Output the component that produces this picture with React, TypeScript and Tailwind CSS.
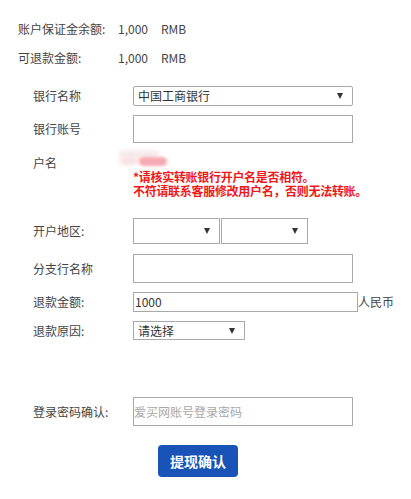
import React from "react";

const font = { fontFamily: '"Noto Sans CJK SC", "Noto Sans", sans-serif' };

function Caret() {
  return (
    <span className="inline-block h-0 w-0 border-x-[3px] border-t-[6px] border-x-transparent border-t-[#333]" />
  );
}

function FakeSelect({ value, className }: { value?: string; className: string }) {
  return (
    <div
      className={`flex items-center justify-between border border-[#a9a9a9] bg-white pl-[4px] pr-[9px] text-[12px] text-[#333] ${className}`}
    >
      <span>{value ?? ""}</span>
      <Caret />
    </div>
  );
}

function Row({
  label,
  children,
  className = "",
}: {
  label: string;
  children: React.ReactNode;
  className?: string;
}) {
  return (
    <div className={`flex items-center pl-[33px] ${className}`}>
      <div className="w-[100px] shrink-0 text-[12px] text-[#444]">{label}</div>
      {children}
    </div>
  );
}

export default function App() {
  return (
    <div className="w-[411px] h-[499px] bg-white" style={font}>
      <div className="pt-[19px] pl-[18px] text-[12px] text-[#444]">
        <div className="flex h-[20px] items-center">
          <span className="w-[100px]">账户保证金余额:</span>
          <span className="w-[43px]">1,000</span>
          <span>RMB</span>
        </div>
        <div className="mt-[9px] flex h-[20px] items-center">
          <span className="w-[100px]">可退款金额:</span>
          <span className="w-[43px]">1,000</span>
          <span>RMB</span>
        </div>
      </div>

      <Row label="银行名称" className="mt-[18px]">
        <FakeSelect value="中国工商银行" className="h-[20px] w-[220px] rounded-[2px]" />
      </Row>

      <Row label="银行账号" className="mt-[9px]">
        <div className="h-[28px] w-[220px] border border-[#a9a9a9]" />
      </Row>

      <div className="mt-[8px] flex pl-[33px]">
        <div className="w-[100px] shrink-0 pt-[2px] text-[12px] leading-[20px] text-[#444]">
          户名
        </div>
        <div>
          <div className="relative h-[19px] w-[60px]">
            <div className="absolute left-[-14px] top-[-1px] h-[9px] w-[40px] rounded-full bg-[#f7eaec] blur-[2px]" />
            <div className="absolute left-[-13px] top-[6px] h-[8px] w-[18px] rounded-full bg-[#f8dfe3] blur-[2px]" />
            <div className="absolute left-[6px] top-[6px] h-[9px] w-[28px] rounded-full bg-[#f5a9b2] blur-[1.5px]" />
          </div>
          <div className="text-[12px] font-bold leading-[14px] tracking-[-0.3px] text-[#f01818]">
            <div>*请核实转账银行开户名是否相符。</div>
            <div>不符请联系客服修改用户名，否则无法转账。</div>
          </div>
        </div>
      </div>

      <Row label="开户地区:" className="mt-[20px]">
        <div className="flex">
          <FakeSelect className="h-[26px] w-[87px]" />
          <FakeSelect className="ml-[1px] h-[26px] w-[87px]" />
        </div>
      </Row>

      <Row label="分支行名称" className="mt-[10px]">
        <div className="h-[29px] w-[220px] border border-[#a9a9a9]" />
      </Row>

      <Row label="退款金额:" className="mt-[9px]">
        <div className="flex items-center">
          <div className="flex h-[20px] w-[225px] items-center border border-[#a9a9a9] pl-[1px] text-[12px] text-[#333]">
            1000
          </div>
          <span className="text-[12px] text-[#444]">人民币</span>
        </div>
      </Row>

      <Row label="退款原因:" className="mt-[9px]">
        <FakeSelect value="请选择" className="h-[19px] w-[112px]" />
      </Row>

      <Row label="登录密码确认:" className="mt-[57px]">
        <div className="flex h-[29px] w-[220px] items-center border border-[#a9a9a9] text-[12px] text-[#a8a8a8]">
          爱买网账号登录密码
        </div>
      </Row>

      <div className="mt-[19px] pl-[158px]">
        <div className="flex h-[32px] w-[80px] items-center justify-center rounded-[4px] bg-[#1953b7] text-[14px] font-bold text-white">
          提现确认
        </div>
      </div>
    </div>
  );
}
